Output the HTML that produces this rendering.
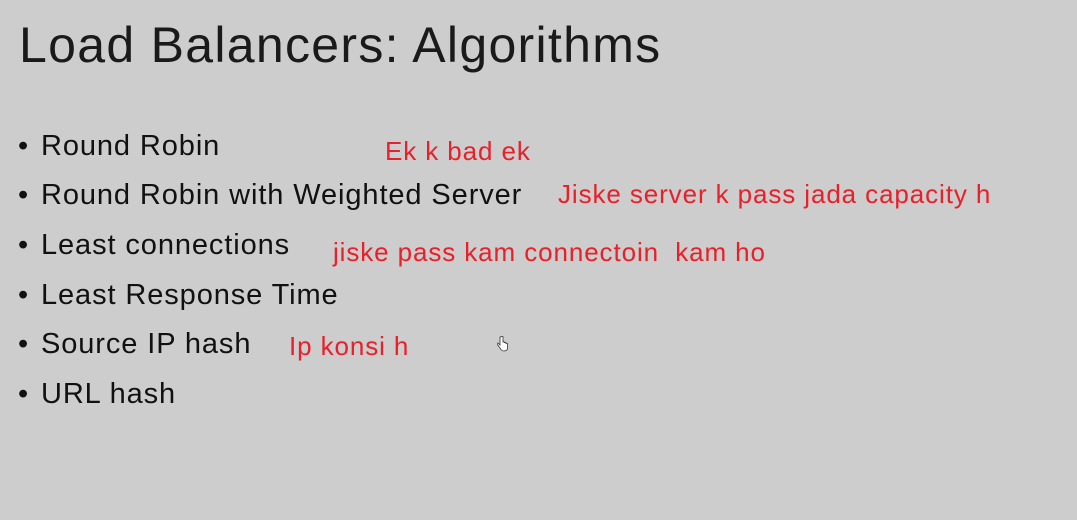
<!DOCTYPE html>
<html><head><style>
html,body{margin:0;padding:0}
body{width:1077px;height:520px;background:#cdcdcd;position:relative;overflow:hidden;font-family:"Liberation Sans",sans-serif}
.t{position:absolute;line-height:1;white-space:nowrap}
.title{left:19px;top:20px;font-size:50px;color:#1a1a1a;letter-spacing:1.3px}
.b{left:18px;font-size:29px;color:#111;letter-spacing:0.9px}
.b span{display:inline-block;width:23px}
.r{font-size:26px;color:#e8202a;letter-spacing:0.9px}
</style></head><body>
<div class="t title">Load Balancers: Algorithms</div>
<div class="t b" style="top:132px"><span>•</span>Round Robin</div>
<div class="t b" style="top:181px"><span>•</span>Round Robin with Weighted Server</div>
<div class="t b" style="top:231px"><span>•</span>Least connections</div>
<div class="t b" style="top:281px"><span>•</span>Least Response Time</div>
<div class="t b" style="top:330px"><span>•</span>Source IP hash</div>
<div class="t b" style="top:380px"><span>•</span>URL hash</div>
<div class="t r" style="left:385px;top:138px">Ek k bad ek</div>
<div class="t r" style="left:558px;top:181px">Jiske server k pass jada capacity h</div>
<div class="t r" style="left:333px;top:239px">jiske pass kam connectoin&nbsp; kam ho</div>
<div class="t r" style="left:289px;top:333px">Ip konsi h</div>
<svg style="position:absolute;left:497px;top:336px" width="12" height="16" viewBox="0 0 12 16"><path d="M3 1v8l-1.5-1.5c-1-1-2 0-1.2 1L3 12c1 2 2 3 4 3s3.5-1 3.5-3V8c0-1-1.5-1-1.5 0V7c0-1-1.5-1-1.5 0V6.5c0-1-1.5-1-1.5 0V1c0-1-2-1-2 0z" fill="#fff" stroke="#333" stroke-width="0.8"/></svg>
</body></html>
